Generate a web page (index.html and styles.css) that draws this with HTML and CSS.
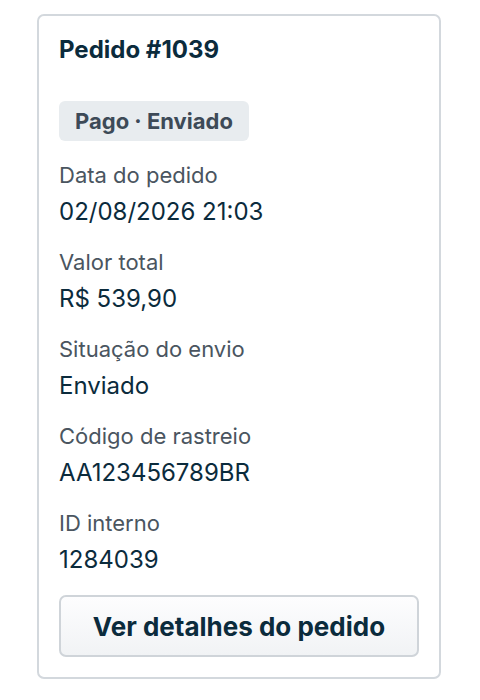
FILE: index.html
```html
<!DOCTYPE html>
<html lang="pt-BR">

<head>
    <meta charset="UTF-8">
    <meta name="viewport" content="width=device-width, initial-scale=1.0">
    <title>Pedido #1039</title>
    <link rel="stylesheet" href="styles.css">
</head>

<body>
    <div class="card">
        <h2 class="card-title">Pedido #1039</h2>

        <span class="badge">Pago · Enviado</span>

        <!-- detalhes do pedido -->
        <dl class="details">
            <div class="detail">
                <dt>Data do pedido</dt>
                <dd>02/08/2026 21:03</dd>
            </div>
            <div class="detail">
                <dt>Valor total</dt>
                <dd>R$ 539,90</dd>
            </div>
            <div class="detail">
                <dt>Situação do envio</dt>
                <dd>Enviado</dd>
            </div>
            <div class="detail">
                <dt>Código de rastreio</dt>
                <dd>AA123456789BR</dd>
            </div>
            <div class="detail">
                <dt>ID interno</dt>
                <dd>1284039</dd>
            </div>
        </dl>

        <button type="button" class="btn">Ver detalhes do pedido</button>
    </div>
</body>

</html>
```

FILE: styles.css
```css
body {
    font-family: Inter, "Noto Sans", Arial, sans-serif;
    background-color: #fff;
    margin: 0;
    padding: 14px 0 0 37px;
    color: #0d2b3a;
}

.card {
    width: 404px;
    box-sizing: border-box;
    border: 2px solid #d3d8dd;
    border-radius: 7px;
    padding: 19px 20px 20px 20px;
}

.card-title {
    margin: 0;
    font-size: 24px;
    font-weight: 700;
    line-height: 30px;
    color: #0b2b3c;
}

.badge {
    display: inline-block;
    margin-top: 36px;
    padding: 5px 16px;
    background-color: #e8ecef;
    border-radius: 6px;
    font-size: 22px;
    font-weight: 700;
    line-height: 30px;
    color: #3d4a57;
}

.details {
    margin: 19px 0 0 0;
}

.detail {
    margin-bottom: 20px;
}

.detail dt {
    font-size: 22px;
    line-height: 30px;
    color: #4a5560;
}

.detail dd {
    margin: 7px 0 0 0;
    font-size: 24px;
    line-height: 30px;
    color: #0b2b3c;
}

.btn {
    display: block;
    width: 100%;
    height: 62px;
    margin-top: 4px;
    font-family: inherit;
    font-size: 26px;
    font-weight: 700;
    color: #0b2b3c;
    background: linear-gradient(#fdfdfe, #f1f3f5);
    border: 2px solid #cfd4d9;
    border-radius: 7px;
    cursor: pointer;
}
```
